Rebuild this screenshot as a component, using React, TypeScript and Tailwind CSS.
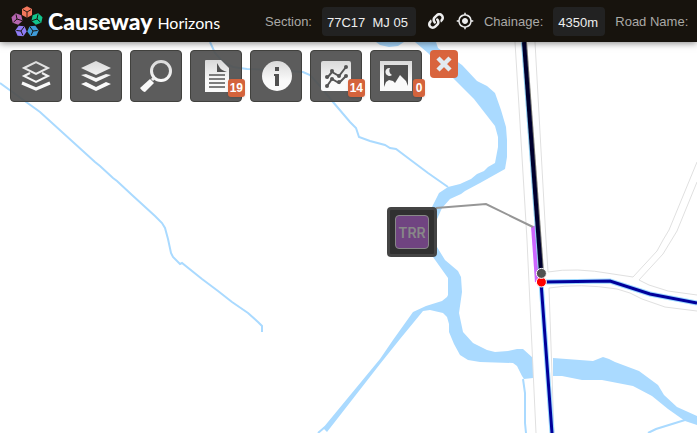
import type { ReactNode } from "react";
import { FaLink } from "react-icons/fa";
import { MdMyLocation } from "react-icons/md";

const cubes = [
  { x: 16, y: 6, r: 0, fill: "#f4775c" },
  { x: 26, y: 13, r: 72, fill: "#12c48b" },
  { x: 22, y: 25, r: 144, fill: "#3f9bd8" },
  { x: 10, y: 25, r: 216, fill: "#8f7cf5" },
  { x: 6, y: 13, r: 288, fill: "#b565b0" },
];

function Logo() {
  return (
    <a href="#home" aria-label="Causeway Horizons" className="flex w-[254px] shrink-0 items-center font-['Lato',sans-serif] text-white">
      <svg viewBox="0 0 32 31" className="h-[31px] w-8 shrink-0" aria-hidden="true">
        {cubes.map((c) => (
          <g key={c.fill} transform={`translate(${c.x} ${c.y}) rotate(${c.r})`}>
            <path d="M0-5.8 5-2.9V2.9L0 5.8-5 2.9V-2.9Z" fill={c.fill} />
            <path d="M0 5.8V0L-4-2.3M0 0 4-2.3" fill="none" stroke="#17130d" strokeWidth="0.9" />
          </g>
        ))}
      </svg>
      <span className="ml-[5px] text-[23px] leading-7 font-black">Causeway</span>
      <span className="ml-[5px] pt-1 text-[16px] leading-6">Horizons</span>
    </a>
  );
}

function Field({ id, label, value, width }: { id: string; label: string; value: string; width: string }) {
  return (
    <div className="flex shrink-0 items-center gap-[10px]">
      <label htmlFor={id} className="pt-[2px] text-[13px] whitespace-nowrap text-[#aaa9a6]">{label}</label>
      <input id={id} readOnly defaultValue={value} className={`h-[29px] rounded bg-[#222] px-[5px] pt-[2px] text-[13px] text-[#eee] outline-none ${width}`} />
    </div>
  );
}

function Tool({ label, badge, children }: { label: string; badge?: string; children: ReactNode }) {
  return (
    <button type="button" aria-label={label} className="relative flex size-[52px] shrink-0 items-center justify-center rounded border border-[#41413e] bg-[#505050]/93">
      <svg viewBox="0 0 32 32" className="size-8" fill="url(#metal)" aria-hidden="true">{children}</svg>
      {badge && (
        <span className="absolute right-[-4px] bottom-1 min-w-3 rounded-[3px] bg-[#d4633c] px-[2px] text-center text-[12px] leading-[18px] font-bold text-white shadow-sm">{badge}</span>
      )}
    </button>
  );
}

function MapDrawing() {
  return (
    <svg viewBox="0 42 697 391" preserveAspectRatio="xMidYMid slice" className="absolute inset-0 size-full" role="img" aria-label="Road network map">
      <g fill="#aadaff">
        <path d="M376 42H404L398 46L389 47L380 45Z" />
        <path d="M415 42H436L438 48L462 65L477 81L487 86L495 93L501 110L506 127L507 140L507 157L505 169L480 183L465 191L461 194L450 199L442 208L434 226H424L432 207L439 193L448 187L460 184L471 179L477 174L484 171L488 167L495 163L498 147L498 137L495 126L488 117L474 99L453 78L438 63L428 53Z" />
        <path d="M430 230L437 247L445 260L458 271L461 277L462 292L459 313L463 332L473 343L487 350L495 352L508 351L517 349L523 349L533 358V378L524 379L522 376L517 366L513 363L480 362L468 360L460 355L454 344L449 332V324L447 317L443 313L430 310L423 311L400 339L380 364L327 432L323 428L380 359L393 340L413 312L426 306L442 301L447 297L448 295V278L433 257L428 250Z" />
        <path d="M553 358L593 361L603 357L609 359L615 362L639 371L658 385L664 395L677 407L697 416V425L685 421L668 409L652 396L633 386L602 380H582L562 376H553Z" />
      </g>
      <g fill="none" stroke="#aadaff" strokeWidth="2">
        <path d="M0 83L40 112L95 162L100 166L113 178L117 181L132 195L155 216L162 223L165 228L168 239L171 253L173 257L180 264L182 263L202 279L218 291L232 302L248 313L258 322L262 326V332" />
        <path d="M210 42L215 53L223 62L233 67L247 69L273 70L303 72L310 75L320 86L333 102L350 122L356 128L359 137L370 141L385 145L390 148L396 149L412 161L428 173L448 187" />
        <path d="M318 433L325 427M685 420L656 429L648 433M523 379L525 393V423L526 433" />
      </g>
      <g fill="none" stroke="#e0e0e0">
        <path d="M515 42L519 107L527 240L536 433" />
        <path d="M535 42L546 240L548 272Q575 267 613 274L633 277L657 251L663 240L669 230L697 162" />
        <path d="M697 182L677 231L663 254L639 280L649 285L668 291L697 295" />
        <path d="M697 311L665 307L642 299L630 293L617 289Q580 283 549 288L554 433" />
      </g>
      <g fill="none">
        <path d="M541 282L552 433M543 282L610 281L650 294L697 303" stroke="#9bd8ff" strokeWidth="5" />
        <path d="M541 282L552 433M543 282L610 281L650 294L697 303" stroke="#00009b" strokeWidth="3" />
        <path d="M533 226L537 282" stroke="#cc66ff" strokeWidth="4" />
        <path d="M523 42L540 272" stroke="#8fccee" strokeWidth="4" />
        <path d="M525 42L542 272" stroke="#777772" strokeWidth="4" />
        <path d="M524 42L541 272" stroke="#00002d" strokeWidth="4" />
        <path d="M436 208L486 204L533 227" stroke="#969696" strokeWidth="2" />
      </g>
      <circle cx="541.4" cy="282" r="5" fill="#f00" stroke="#fff" />
      <circle cx="541.4" cy="273.4" r="5" fill="#505050" stroke="#fff" />
    </svg>
  );
}

export default function App() {
  return (
    <div className="flex min-h-screen flex-col overflow-hidden bg-white font-['Liberation_Sans',Arial,sans-serif]">
      <header className="z-10 flex h-[42px] shrink-0 items-center overflow-hidden bg-[#17130d] pl-[11px] shadow-[0_1px_7px_rgba(0,0,0,0.5)]">
        <Logo />
        <div className="flex shrink-0 items-center gap-[10px]">
          <Field id="section" label="Section:" value={"77C17\u00a0 MJ 05"} width="w-[94px]" />
          <div className="flex items-center gap-3 pl-[2px] text-[#eee]">
            <button type="button" aria-label="Link section"><FaLink className="size-4" /></button>
            <button type="button" aria-label="Locate section"><MdMyLocation className="size-[18px]" /></button>
          </div>
          <Field id="chainage" label="Chainage:" value="4350m" width="w-[52px]" />
          <span className="pt-[2px] text-[13px] whitespace-nowrap text-[#aaa9a6]">Road Name:</span>
        </div>
      </header>
      <main className="relative flex-1 overflow-hidden">
        <MapDrawing />
        <svg className="absolute size-0" aria-hidden="true">
          <defs>
            <linearGradient id="metal" gradientUnits="userSpaceOnUse" x1="0" y1="0" x2="0" y2="32">
              <stop offset="0" stopColor="#d8d8d8" />
              <stop offset="0.65" stopColor="#fafafa" />
            </linearGradient>
          </defs>
        </svg>
        <nav aria-label="Map tools" className="relative flex items-start gap-2 px-[10px] pt-2">
          <Tool label="Layer outlines">
            <g fill="none" stroke="url(#metal)">
              <path d="M4 8 16 2 28 8 16 14Z" strokeWidth="2" />
              <path d="M10 13 4 16 16 22 28 16 22 13" strokeWidth="2" />
              <path d="M2 23 16 29 30 23" strokeWidth="3" />
            </g>
          </Tool>
          <Tool label="Layers">
            <path d="M1 8 16 1 31 8 16 15Z" />
            <path d="M1 15 6 14 16 18 26 14 31 15 16 22Z" />
            <path d="M1 24 6 22 16 27 26 22 31 24 16 31Z" />
          </Tool>
          <Tool label="Search">
            <circle cx="21" cy="11" r="9.5" fill="none" stroke="url(#metal)" strokeWidth="3" />
            <path d="M10 19 14 23 5 32Q3 32 0 28Z" />
            <path d="M14 18 12 20" stroke="#eee" strokeWidth="3" />
          </Tool>
          <Tool label="Documents" badge="19">
            <path d="M5 1Q5 0 6 0H21L29 8V32H5Z" />
            <path d="M17 3V12H27Q21 10 20 8Z" fill="#505050" />
            <path d="M9 15H25M9 19H25M9 23H25M9 27H25" fill="none" stroke="#555" strokeWidth="1.5" />
          </Tool>
          <Tool label="Information">
            <circle cx="17" cy="16" r="15" />
            <path d="M15 7H19V11H15ZM14 14H19V26H15V16H14Z" fill="#505050" />
          </Tool>
          <Tool label="Charts" badge="14">
            <rect x="1" y="1" width="30" height="30" rx="2" />
            <path d="M7 18 12 12 19 16 26 7M7 26 12 19 19 23 26 16" fill="none" stroke="#555" strokeWidth="2" />
            <g fill="#555">
              <circle cx="7" cy="17" r="2" /><circle cx="12" cy="11" r="2" /><circle cx="19" cy="16" r="2" /><circle cx="26" cy="7" r="2" />
              <circle cx="7" cy="26" r="2" /><circle cx="12" cy="19" r="2" /><circle cx="19" cy="22" r="2" /><circle cx="26" cy="16" r="2" />
            </g>
          </Tool>
          <Tool label="Photos" badge="0">
            <path d="M0 1H32V31H0Z" />
            <path d="M4 5H28V26L26 21 20 15 15 23 13 21 9 20 6 22 4 27Z" fill="#505050" />
            <path d="M10 8A4 4 0 1 0 12 15A5 5 0 0 1 10 8Z" fill="#eee" />
          </Tool>
          <button type="button" aria-label="Close tools" className="flex size-7 shrink-0 items-center justify-center rounded bg-[#d9643d]">
            <svg viewBox="0 0 16 16" className="size-4" aria-hidden="true">
              <path d="M2 2 14 14M14 2 2 14" stroke="#e2eaf0" strokeWidth="4.5" />
            </svg>
          </button>
        </nav>
        <button type="button" className="absolute top-[165px] left-[387px] flex size-[50px] items-center justify-center rounded border-[3px] border-[#444] bg-[#303030]">
          <span className="flex size-[34px] items-center justify-center rounded border border-[#888] bg-[#704481] font-['Inter',sans-serif] text-[14px] font-semibold text-[#888]">TRR</span>
        </button>
      </main>
    </div>
  );
}
